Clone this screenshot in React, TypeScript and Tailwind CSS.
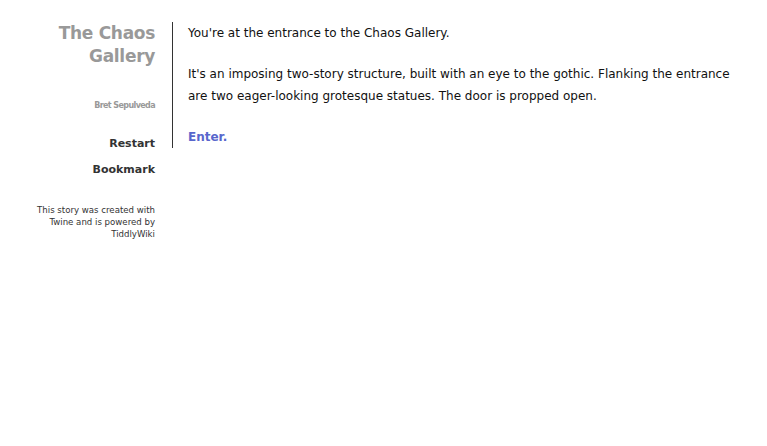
export default function App() {
  const font = { fontFamily: '"DejaVu Sans", Verdana, sans-serif' };
  return (
    <div className="w-[767px] h-[446px] bg-white flex items-start pt-[22px]" style={font}>
      <div className="w-[155px] shrink-0 flex flex-col items-end text-right">
        <div className="text-[17px] leading-[23px] font-bold text-[#999999] tracking-[-0.3px]">
          The Chaos<br />Gallery
        </div>
        <div className="mt-[32px] text-[8px] leading-[12px] font-bold text-[#999999] tracking-[-0.6px]">Bret Sepulveda</div>
        <div className="mt-[24px] text-[11px] leading-[16px] font-bold text-[#333333]">Restart</div>
        <div className="mt-[10px] text-[11px] leading-[16px] font-bold text-[#333333]">Bookmark</div>
        <div className="mt-[26px] text-[8.6px] leading-[12px] text-[#333333] w-[125px]">
          This story was created with Twine and is powered by TiddlyWiki
        </div>
      </div>
      <div className="ml-[17px] border-l border-[#333333] pl-[15px] w-[575px] text-[12px] leading-[22px] text-[#111111]">
        <p>You're at the entrance to the Chaos Gallery.</p>
        <p className="mt-[19px]">
          It's an imposing two-story structure, built with an eye to the gothic. Flanking the entrance are two eager-looking grotesque statues. The door is propped open.
        </p>
        <p className="mt-[19px] font-bold text-[#5866cc]">Enter.</p>
      </div>
    </div>
  );
}
